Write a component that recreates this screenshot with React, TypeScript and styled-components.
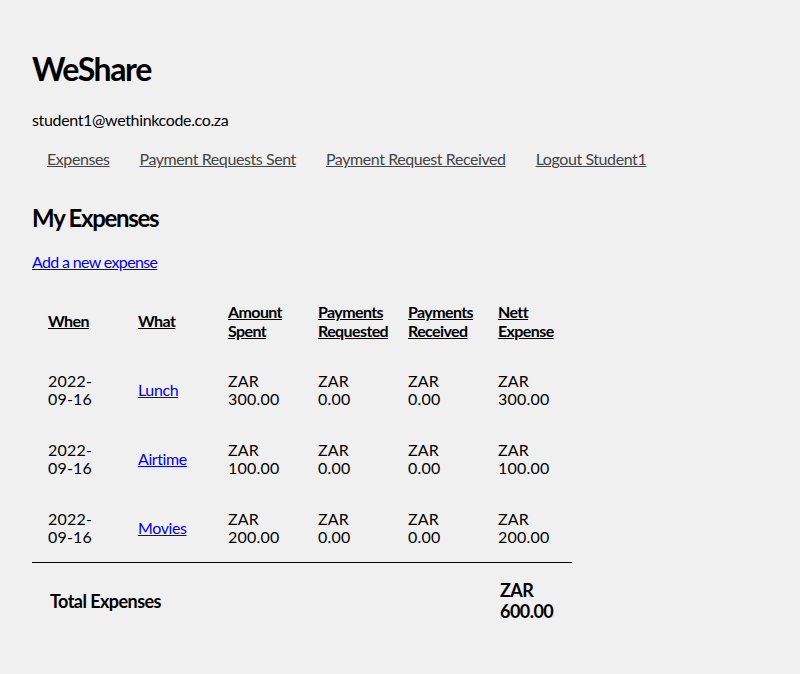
import React from "react";
import styled, { createGlobalStyle } from "styled-components";

const Global = createGlobalStyle`
  body {
    margin: 0;
    background: #f0f0f0;
    color: #000;
    font-family: Lato, "Liberation Sans", sans-serif;
    font-size: 16px;
    letter-spacing: -0.5px;
  }
`;

const Page = styled.div`
  padding: 32px 32px 160px;
`;

const Title = styled.h1`
  font-size: 32px;
  font-weight: 700;
  margin: 18px 0 0;
  line-height: 37px;
  letter-spacing: -1.4px;
`;

const Email = styled.p`
  margin: 24px 0 0;
  line-height: 18px;
  letter-spacing: -0.35px;
`;

const Nav = styled.nav`
  display: flex;
  margin-top: 21px;
`;

const NavLink = styled.a`
  padding: 0 15px;
  color: #444;
  text-decoration: underline;
  line-height: 18px;
  letter-spacing: -0.42px;
`;

const SectionTitle = styled.h2`
  font-size: 24px;
  font-weight: 700;
  margin: 36px 0 0;
  line-height: 28px;
  letter-spacing: -1.3px;
`;

const AddLink = styled.a`
  display: inline-block;
  margin-top: 21px;
  color: #0000ee;
  text-decoration: underline;
  line-height: 18px;
  letter-spacing: -0.65px;
`;

const Table = styled.table`
  margin-top: 15px;
  border-collapse: collapse;
  table-layout: fixed;
  width: 540px;
`;

const HeadCell = styled.th`
  box-sizing: border-box;
  width: 90px;
  padding: 15.5px 16px;
  text-align: left;
  vertical-align: middle;
  font-weight: 700;
  text-decoration: underline;
  line-height: 19px;
  letter-spacing: -0.6px;
`;

const Cell = styled.td`
  padding: 16.5px 16px;
  vertical-align: middle;
  line-height: 18px;
  letter-spacing: 0.2px;
`;

const ItemLink = styled.a`
  color: #0000ee;
  text-decoration: underline;
  letter-spacing: -0.4px;
`;

const TotalRow = styled.tr`
  border-top: 1px solid #000;
`;

const TotalCell = styled.th`
  padding: 17px 18px 18px;
  text-align: left;
  font-size: 18px;
  font-weight: 700;
  line-height: 21px;
  vertical-align: middle;
  letter-spacing: -0.55px;
`;

type Expense = { when: string; what: string; spent: string; requested: string; received: string; nett: string };

const expenses: Expense[] = [
  { when: "2022-09-16", what: "Lunch", spent: "300.00", requested: "0.00", received: "0.00", nett: "300.00" },
  { when: "2022-09-16", what: "Airtime", spent: "100.00", requested: "0.00", received: "0.00", nett: "100.00" },
  { when: "2022-09-16", what: "Movies", spent: "200.00", requested: "0.00", received: "0.00", nett: "200.00" },
];

const headers = ["When", "What", "Amount Spent", "Payments Requested", "Payments Received", "Nett Expense"];

export default function App() {
  return (
    <>
      <Global />
      <Page>
        <Title>WeShare</Title>
        <Email>student1@wethinkcode.co.za</Email>
        <Nav>
          <NavLink href="#">Expenses</NavLink>
          <NavLink href="#">Payment Requests Sent</NavLink>
          <NavLink href="#">Payment Request Received</NavLink>
          <NavLink href="#">Logout Student1</NavLink>
        </Nav>
        <SectionTitle>My Expenses</SectionTitle>
        <AddLink href="#">Add a new expense</AddLink>
        <Table>
          <thead>
            <tr>
              {headers.map((h) => (
                <HeadCell key={h}>{h}</HeadCell>
              ))}
            </tr>
          </thead>
          <tbody>
            {expenses.map((e) => (
              <tr key={e.what}>
                <Cell>{e.when}</Cell>
                <Cell>
                  <ItemLink href="#">{e.what}</ItemLink>
                </Cell>
                <Cell>ZAR {e.spent}</Cell>
                <Cell>ZAR {e.requested}</Cell>
                <Cell>ZAR {e.received}</Cell>
                <Cell>ZAR {e.nett}</Cell>
              </tr>
            ))}
          </tbody>
          <tfoot>
            <TotalRow>
              <TotalCell colSpan={5}>Total Expenses</TotalCell>
              <TotalCell>ZAR 600.00</TotalCell>
            </TotalRow>
          </tfoot>
        </Table>
      </Page>
    </>
  );
}
